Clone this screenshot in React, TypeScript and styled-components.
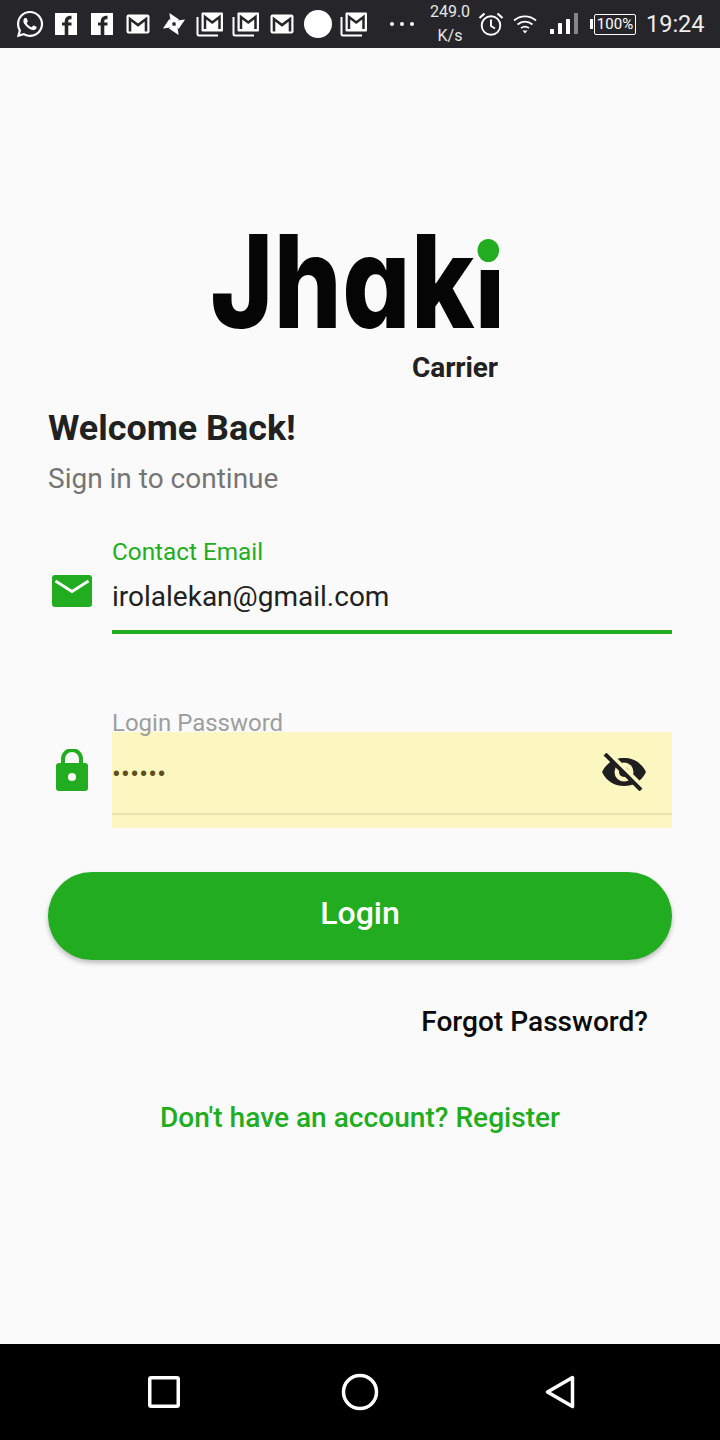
import React from "react";
import styled, { createGlobalStyle } from "styled-components";
import { FaWhatsapp } from "react-icons/fa";

const GREEN = "#22ad21";
const BAR = "#26262a";

const GlobalStyle = createGlobalStyle`
  html, body {
    margin: 0;
    padding: 0;
    background: #fafafa;
    font-family: Roboto, "Liberation Sans", sans-serif;
  }
  * { box-sizing: border-box; }
`;

const Facebook = () => (
  <svg width="22" height="22" viewBox="0 0 22 22">
    <rect width="22" height="22" fill="#fff" />
    <path d="M11.500 22V8a3.500 3.500 0 0 1 3.500-3.500h1.500" fill="none" stroke={BAR} strokeWidth="3.600" />
    <path d="M7 11h9.500" fill="none" stroke={BAR} strokeWidth="3" />
  </svg>
);

const Gmail = () => (
  <svg width="24" height="20" viewBox="0 0 24 20">
    <rect x="0.500" y="0.500" width="23" height="19" rx="2" fill="#fff" />
    <path d="M4 17.500V5l8 6 8-6v12.500" fill="none" stroke={BAR} strokeWidth="2.600" />
  </svg>
);

const GmailStack = () => (
  <svg width="28" height="26" viewBox="0 0 28 26">
    <path d="M1.500 6v17a1.500 1.500 0 0 0 1.500 1.500h19" fill="none" stroke="#fff" strokeWidth="2" />
    <rect x="5.500" y="1.500" width="21.500" height="19" rx="1" fill="#fff" />
    <path d="M9 18V6l7.250 5.500L23.500 6v12" fill="none" stroke={BAR} strokeWidth="2.500" />
  </svg>
);

const BLADE = "M8 1 18.500 8 15 11 9.500 11.500z";

const Pinwheel = () => (
  <svg width="26" height="26" viewBox="0 0 26 26" fill="#fff">
    {[0, 90, 180, 270].map((deg) => (
      <path key={deg} d={BLADE} transform={`rotate(${deg} 13 13)`} />
    ))}
  </svg>
);

const Alarm = () => (
  <svg width="26" height="24" viewBox="0 0 26 24" fill="none" stroke="#fff" strokeWidth="1.900">
    <circle cx="13" cy="13.500" r="9.300" />
    <path d="M13 7.500v6.500l4 2.500" />
    <path d="M1.500 6 6.500 1.500M24.500 6 19.500 1.500" strokeWidth="2.200" />
  </svg>
);

const Wifi = () => (
  <svg width="24" height="20" viewBox="0 0 24 20" fill="none" stroke="#fff" strokeWidth="1.700">
    <path d="M1 6.500c6.500-5.500 15.500-5.500 22 0" />
    <path d="M4.500 10.500c4.500-3.800 10.500-3.800 15 0" />
    <path d="M8 14.200c2.500-2 5.500-2 8 0" />
    <path d="M9.500 16.500h5L12 19.500z" fill="#fff" stroke="none" />
  </svg>
);

const Signal = () => (
  <svg width="30" height="24" viewBox="0 0 30 24" fill="#fff">
    <rect x="1" y="17" width="4" height="5" rx="0.500" />
    <rect x="9" y="11" width="4" height="11" rx="0.500" />
    <rect x="17" y="7" width="4" height="15" rx="0.500" />
    <rect x="25" y="1" width="4" height="21" rx="0.500" fill="#85858a" />
  </svg>
);

const MailIcon = () => (
  <svg width="40" height="32" viewBox="0 0 40 32">
    <rect width="40" height="32" rx="3" fill={GREEN} />
    <path d="M3.500 6 20 16.500 36.500 6" fill="none" stroke="#fafafa" strokeWidth="2.800" />
  </svg>
);

const LockIcon = () => (
  <svg width="32" height="42" viewBox="0 0 32 42">
    <path d="M7 16v-6a9 9 0 0 1 18 0v6" fill="none" stroke={GREEN} strokeWidth="4" />
    <rect y="14" width="32" height="28" rx="3" fill={GREEN} />
    <circle cx="16" cy="28" r="4" fill="#fafafa" />
  </svg>
);

const EyeOff = () => (
  <svg width="44" height="38" viewBox="0 0 44 38">
    <path d="M0 19C5 9 13 5 22 5s17 4 22 14c-5 10-13 14-22 14S5 29 0 19z" fill="#1f1f1f" />
    <circle cx="22" cy="19" r="9.500" fill="#fcf6c1" />
    <circle cx="22" cy="19" r="5" fill="#1f1f1f" />
    <path d="M5 0 41 36" stroke="#fcf6c1" strokeWidth="7" />
    <path d="M3 1 39 37" stroke="#1f1f1f" strokeWidth="4" />
  </svg>
);

const App = () => (
  <>
    <GlobalStyle />
    <Screen>
      <StatusBar>
        <Slot $w={28} $ml={16}><FaWhatsapp size={30} /></Slot>
        <Slot $w={24} $ml={10}><Facebook /></Slot>
        <Slot $w={24} $ml={12}><Facebook /></Slot>
        <Slot $w={24} $ml={12}><Gmail /></Slot>
        <Slot $w={24} $ml={12}><Pinwheel /></Slot>
        <Slot $w={28} $ml={10}><GmailStack /></Slot>
        <Slot $w={28} $ml={8}><GmailStack /></Slot>
        <Slot $w={24} $ml={10}><Gmail /></Slot>
        <Slot $w={28} $ml={10}><WhiteDot /></Slot>
        <Slot $w={28} $ml={8}><GmailStack /></Slot>
        <MoreDots $ml={22}>
          <i /><i /><i />
        </MoreDots>
        <Speed>
          <span>249.0</span>
          <span>K/s</span>
        </Speed>
        <Slot $w={26} $ml={8}><Alarm /></Slot>
        <Slot $w={24} $ml={9}><Wifi /></Slot>
        <Slot $w={30} $ml={12}><Signal /></Slot>
        <Battery>100%</Battery>
        <Clock>19:24</Clock>
      </StatusBar>

      <Main>
        <LogoBlock>
          <LogoMark>
            Jhak<LogoStem>i</LogoStem>
            <LogoDot />
          </LogoMark>
          <LogoSub>Carrier</LogoSub>
        </LogoBlock>

        <Title>Welcome Back!</Title>
        <Subtitle>Sign in to continue</Subtitle>

        <EmailRow>
          <IconCell $top={38}><MailIcon /></IconCell>
          <EmailField>
            <FieldLabel $active>Contact Email</FieldLabel>
            <FieldValue>irolalekan@gmail.com</FieldValue>
          </EmailField>
        </EmailRow>

        <PasswordRow>
          <IconCell $top={41}><LockIcon /></IconCell>
          <PasswordField>
            <FieldLabel>Login Password</FieldLabel>
            <AutofillBox>
              <Dots>••••••</Dots>
              <EyeOff />
            </AutofillBox>
          </PasswordField>
        </PasswordRow>

        <LoginButton type="button">Login</LoginButton>
        <Forgot>Forgot Password?</Forgot>
        <Register>Don't have an account? Register</Register>
      </Main>

      <NavBar>
        <Slot $w={40} $ml={144}>
          <svg width="32" height="32" viewBox="0 0 32 32">
            <rect x="1.750" y="1.750" width="28.500" height="28.500" rx="1.500" fill="none" stroke="#fff" strokeWidth="3.500" />
          </svg>
        </Slot>
        <Slot $w={40} $ml={156}>
          <svg width="38" height="38" viewBox="0 0 38 38">
            <circle cx="19" cy="19" r="16.500" fill="none" stroke="#fff" strokeWidth="3.500" />
          </svg>
        </Slot>
        <Slot $w={40} $ml={160}>
          <svg width="30" height="34" viewBox="0 0 30 34">
            <path d="M27.500 2.500 2.500 17l25 14.500z" fill="none" stroke="#fff" strokeWidth="3.500" strokeLinejoin="round" />
          </svg>
        </Slot>
      </NavBar>
    </Screen>
  </>
);

const Screen = styled.div`
  width: 720px;
  height: 1440px;
  display: flex;
  flex-direction: column;
  background: #fafafa;
  overflow: hidden;
`;

const StatusBar = styled.div`
  height: 48px;
  flex: none;
  display: flex;
  align-items: center;
  background: ${BAR};
  color: #fff;
`;

const Slot = styled.div<{ $w: number; $ml: number }>`
  width: ${(p) => p.$w}px;
  margin-left: ${(p) => p.$ml}px;
  flex: none;
  display: flex;
  align-items: center;
  justify-content: center;
`;

const WhiteDot = styled.div`
  width: 28px;
  height: 28px;
  border-radius: 50%;
  background: #fff;
`;

const MoreDots = styled.div<{ $ml: number }>`
  margin-left: ${(p) => p.$ml}px;
  width: 24px;
  display: flex;
  justify-content: space-between;

  i {
    width: 4px;
    height: 4px;
    border-radius: 50%;
    background: #fff;
  }
`;

const Speed = styled.div`
  width: 40px;
  margin-left: 16px;
  display: flex;
  flex-direction: column;
  align-items: center;
  font-size: 16px;
  line-height: 24px;
  color: #e6e6e6;
`;

const Battery = styled.div`
  width: 42px;
  height: 21px;
  margin-left: 15px;
  border: 1.500px solid #fff;
  border-radius: 2px;
  font-size: 15px;
  line-height: 18px;
  text-align: center;
  position: relative;

  &::before {
    content: "";
    position: absolute;
    left: -5px;
    top: 4px;
    width: 2.500px;
    height: 10px;
    background: #fff;
  }
`;

const Clock = styled.div`
  margin-left: 10px;
  font-size: 23.500px;
  color: #eee;
`;

const Main = styled.main`
  flex: 1;
  display: flex;
  flex-direction: column;
  padding: 183px 48px 0;
`;

const LogoBlock = styled.div`
  display: flex;
  flex-direction: column;
  align-items: flex-end;
`;

const LogoMark = styled.div`
  position: relative;
  align-self: center;
  margin-right: 4px;
  font-family: Inter, sans-serif;
  font-feature-settings: "cv11" 1;
  font-size: 129px;
  font-weight: 800;
  line-height: 100px;
  letter-spacing: 0.5px;
  color: #050505;
  transform: scaleX(0.83);
`;

/* hides the stock dot of the i so the round green one can sit there */
const LogoStem = styled.span`
  display: inline-block;
  background: linear-gradient(transparent 0 39px, #050505 39px);
  -webkit-background-clip: text;
  background-clip: text;
  color: transparent;
`;

const LogoDot = styled.span`
  position: absolute;
  right: 8px;
  top: 8px;
  width: 26px;
  height: 23px;
  border-radius: 50%;
  background: ${GREEN};
`;

const LogoSub = styled.div`
  margin: 20px 174px 0 0;
  font-size: 28px;
  font-weight: 700;
  line-height: 34px;
  letter-spacing: -0.1px;
  color: #212121;
`;

const Title = styled.h1`
  margin: 21px 0 0;
  font-size: 35.900px;
  font-weight: 700;
  line-height: 44px;
  color: #212121;
`;

const Subtitle = styled.p`
  margin: 12px 0 0;
  font-size: 28px;
  line-height: 34px;
  color: #757575;
`;

const EmailRow = styled.div`
  display: flex;
  align-items: flex-start;
  margin-top: 41px;
`;

const PasswordRow = styled(EmailRow)`
  margin-top: 74px;
`;

const IconCell = styled.div<{ $top: number }>`
  width: 64px;
  flex: none;
  display: flex;
  justify-content: center;
  padding-right: 16px;
  padding-top: ${(p) => p.$top}px;
`;

const EmailField = styled.div`
  flex: 1;
  height: 97px;
  border-bottom: 4px solid ${GREEN};
`;

const PasswordField = styled.div`
  flex: 1;
`;

const FieldLabel = styled.div<{ $active?: boolean }>`
  height: 30px;
  font-size: ${(p) => (p.$active ? "24.300px" : "24px")};
  line-height: 30px;
  color: ${(p) => (p.$active ? GREEN : "#9e9e9e")};
`;

const FieldValue = styled.div`
  margin-top: 12px;
  font-size: 28px;
  line-height: 36px;
  color: #212121;
`;

const AutofillBox = styled.div`
  height: 96px;
  margin-top: -6px;
  display: flex;
  align-items: center;
  justify-content: space-between;
  padding: 0 26px 16px 0;
  background: linear-gradient(
    #fcf6c1 0 81px,
    #e8e2b2 81px 83px,
    #fcf6c1 83px
  );
`;

const Dots = styled.span`
  font-size: 26px;
  line-height: 26px;
  letter-spacing: 0.3px;
  margin-top: 3px;
  color: #5e4f19;
`;

const LoginButton = styled.button`
  height: 88px;
  margin-top: 44px;
  padding: 0 0 6px;
  border: none;
  border-radius: 44px;
  background: ${GREEN};
  box-shadow: 0 3px 5px rgba(0, 0, 0, 0.25);
  color: #fff;
  font-family: inherit;
  font-size: 32px;
  font-weight: 500;
`;

const Forgot = styled.div`
  margin: 45px 24px 0 0;
  text-align: right;
  font-size: 28.100px;
  font-weight: 500;
  line-height: 34px;
  color: #0a0a0a;
`;

const Register = styled.div`
  margin-top: 62px;
  text-align: center;
  font-size: 28.100px;
  font-weight: 500;
  line-height: 34px;
  color: ${GREEN};
`;

const NavBar = styled.nav`
  height: 96px;
  flex: none;
  display: flex;
  align-items: center;
  background: #000;
`;

export default App;
